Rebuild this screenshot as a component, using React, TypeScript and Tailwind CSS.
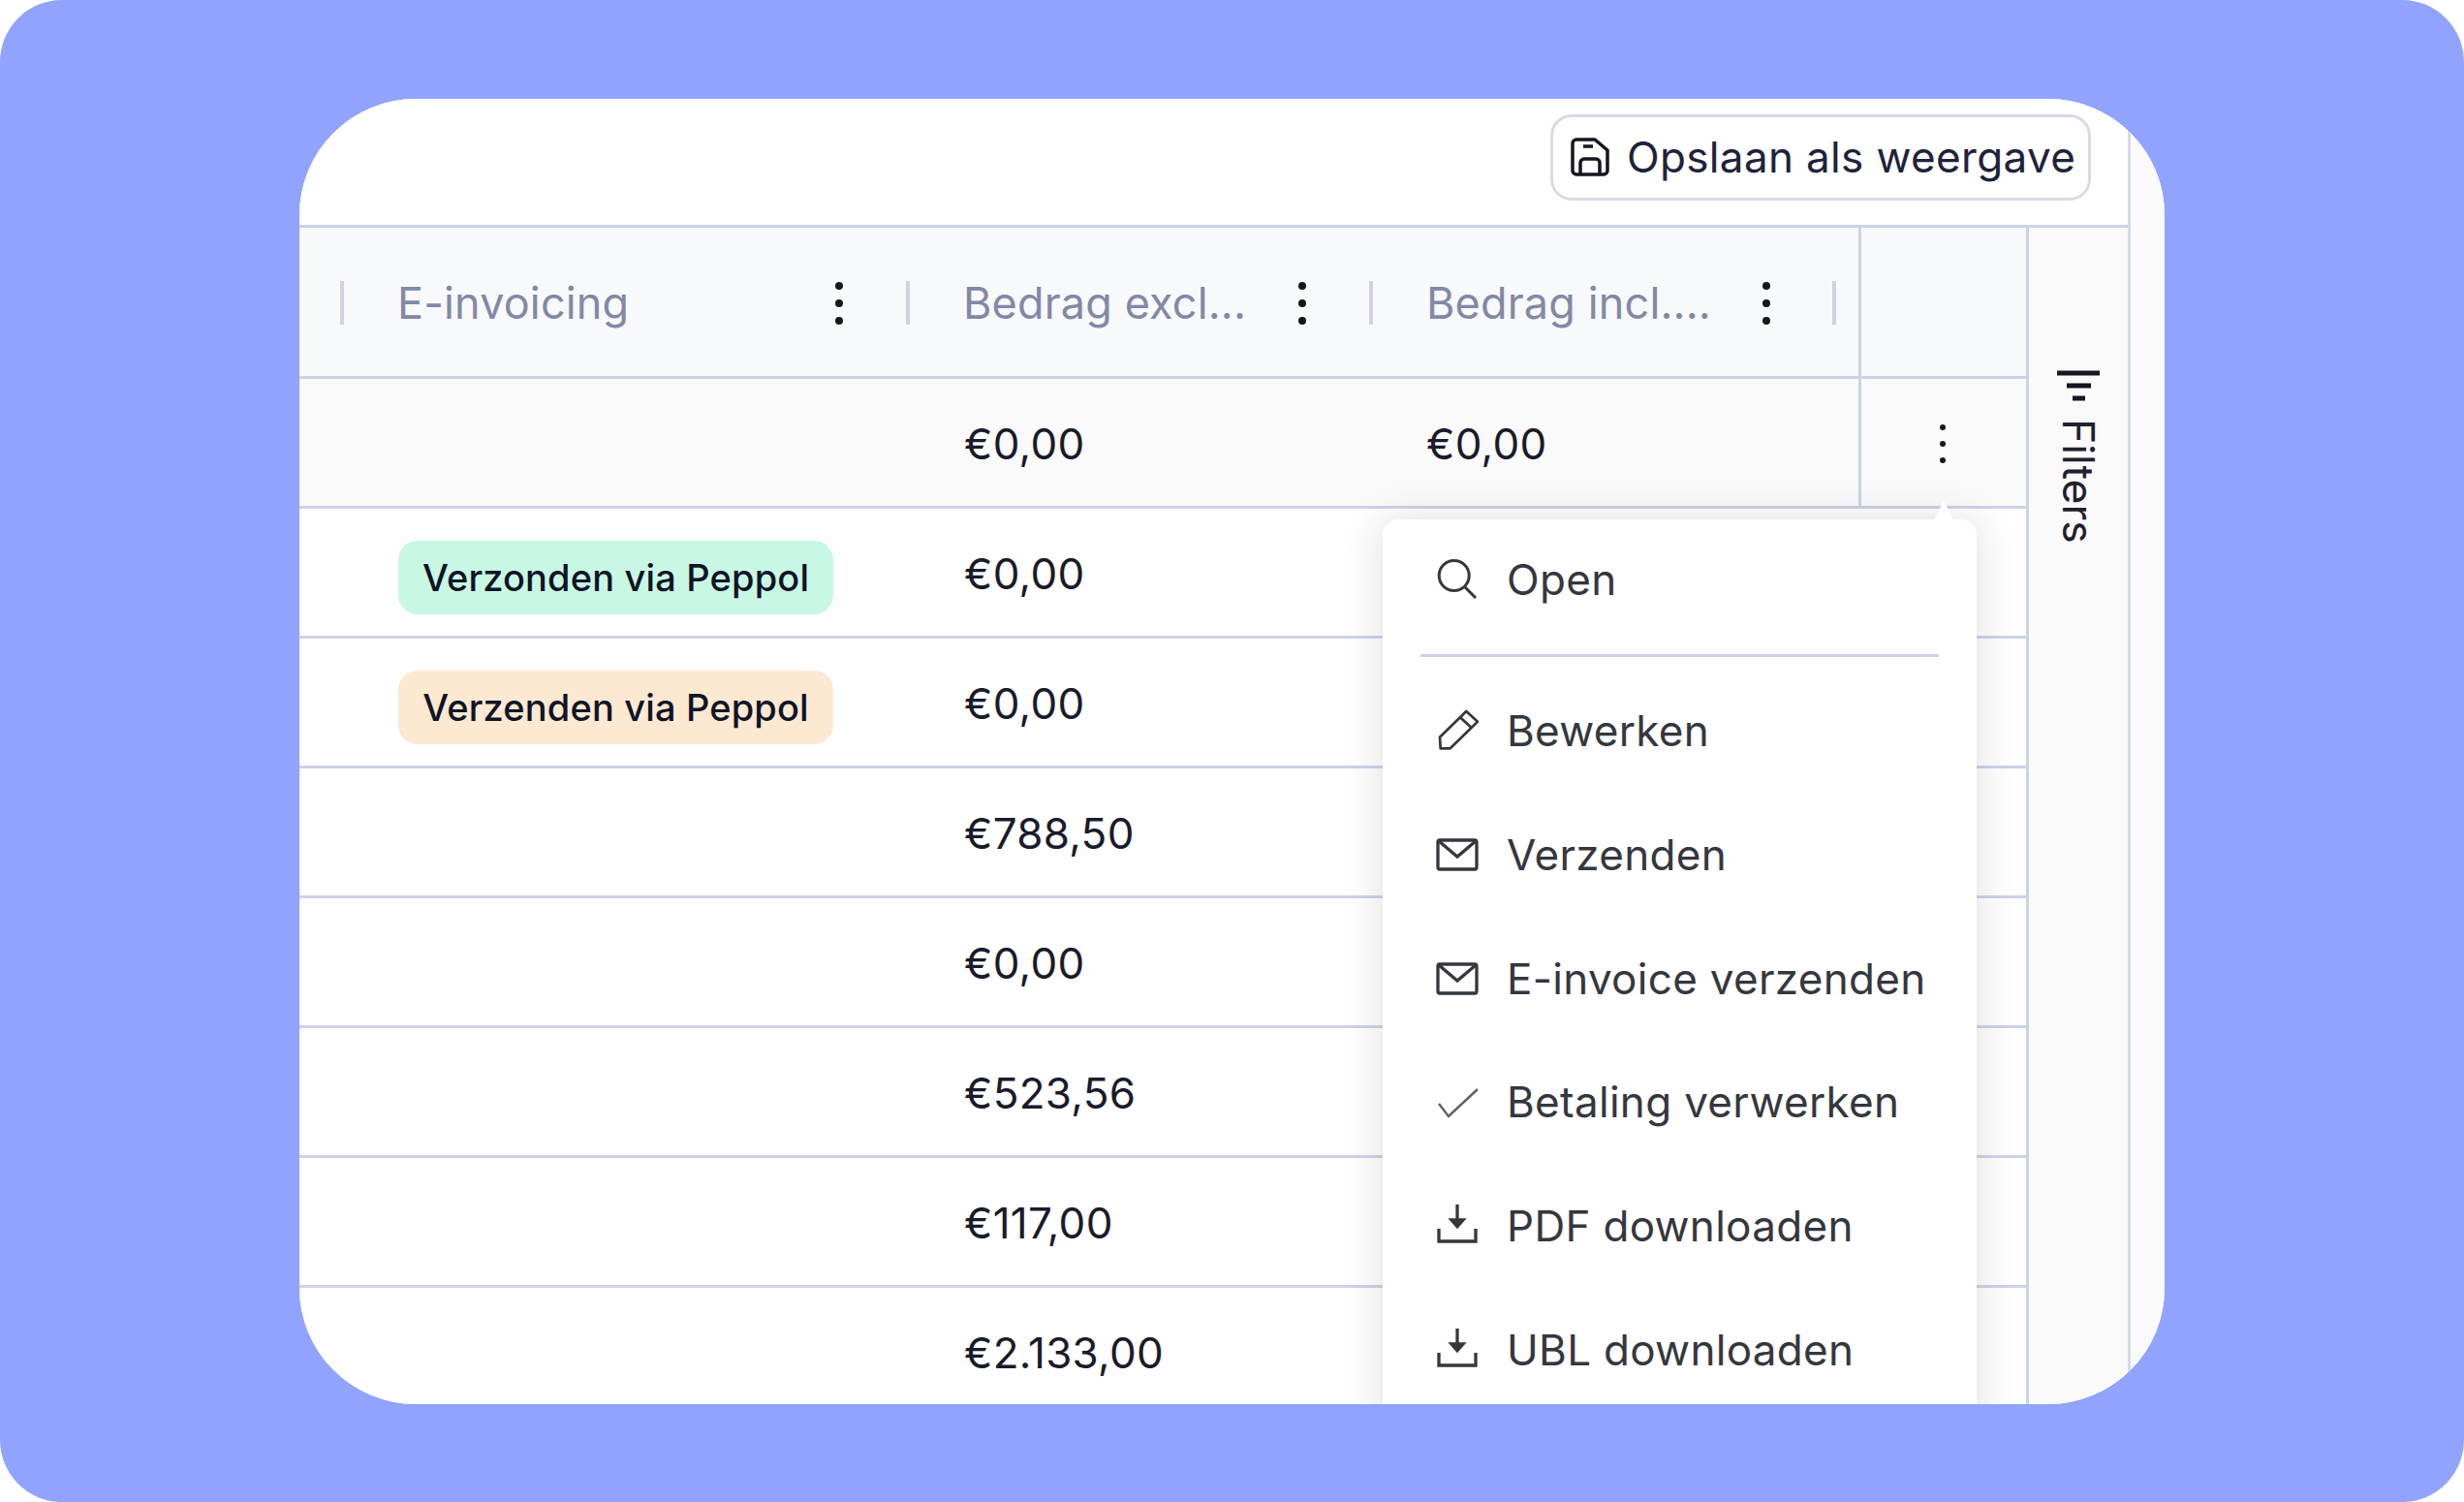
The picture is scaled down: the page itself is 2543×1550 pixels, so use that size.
const rows = [
    { value: '€0,00', badge: 'Verzonden via Peppol', color: 'bg-[#c8f8e3]' },
    { value: '€0,00', badge: 'Verzenden via Peppol', color: 'bg-[#fde9d2]' },
    { value: '€788,50' },
    { value: '€0,00' },
    { value: '€523,56' },
    { value: '€117,00' },
    { value: '€2.133,00' },
]

function Icon({ children, strokeWidth = 3 }: { children: React.ReactNode; strokeWidth?: number }) {
    return (
        <svg width="44" height="44" viewBox="0 0 44 44" fill="none" stroke="currentColor" strokeWidth={strokeWidth} className="shrink-0">
            {children}
        </svg>
    )
}

const SearchIcon = () => (
    <Icon>
        <circle cx="18.700" cy="18" r="15.500" />
        <path d="M30 30l11 11" />
    </Icon>
)

const PencilIcon = () => (
    <Icon strokeWidth={2.700}>
        <path d="M31.300 2L43 12.700 14.700 40.300H4.700L4 28.700z" strokeLinejoin="round" />
        <path d="M24.700 8l12 11" />
    </Icon>
)

const MailIcon = () => (
    <Icon strokeWidth={3.300}>
        <rect x="2" y="7" width="40" height="30" rx="2" />
        <path d="M3 8l19 16L41 8" />
    </Icon>
)

const CheckIcon = () => (
    <span className="text-[#5f6169]">
        <Icon strokeWidth={2.400}>
            <path d="M3 24l10 13L43 9" />
        </Icon>
    </span>
)

const DownloadIcon = () => (
    <Icon strokeWidth={3.300}>
        <path d="M3 25v13h38V25" />
        <path d="M22 0v23" />
        <path d="M14 15l8 9 8-9z" fill="currentColor" strokeWidth={1.500} />
    </Icon>
)

const menu = [
    { label: 'Bewerken', icon: <PencilIcon /> },
    { label: 'Verzenden', icon: <MailIcon /> },
    { label: 'E-invoice verzenden', icon: <MailIcon /> },
    { label: 'Betaling verwerken', icon: <CheckIcon /> },
    { label: 'PDF downloaden', icon: <DownloadIcon /> },
    { label: 'UBL downloaden', icon: <DownloadIcon /> },
]

function Dots({ small = false }: { small?: boolean }) {
    const dot = small ? 'w-[6px] h-[6px]' : 'w-[8px] h-[8px]'
    return (
        <div className={`flex flex-col items-center shrink-0 ${small ? 'gap-[11px]' : 'gap-[10px]'}`}>
            <span className={`rounded-full bg-[#15161f] ${dot}`} />
            <span className={`rounded-full bg-[#15161f] ${dot}`} />
            <span className={`rounded-full bg-[#15161f] ${dot}`} />
        </div>
    )
}

function Sep() {
    return <span className="w-[4px] h-[45px] bg-[#ccd3e6] shrink-0" />
}

function HeaderCell({ label, className, labelWidth }: { label: string; className: string; labelWidth: string }) {
    return (
        <div className={`flex items-center shrink-0 ${className}`}>
            <Sep />
            <span className={`ml-[55px] text-[45px] tracking-[0.15px] text-[#8289a6] whitespace-nowrap ${labelWidth}`}>{label}</span>
            <Dots />
        </div>
    )
}

export default function App() {
    return (
        <div
            className="w-[2543px] h-[1550px] bg-[#8fa3ff] rounded-[64px] flex items-center justify-center overflow-hidden"
            style={{ fontFamily: 'Inter, sans-serif' }}
        >
            <div className="relative flex w-[1925px] h-[1347px] bg-white rounded-[120px] overflow-hidden">
                <div className="flex flex-col w-[1890px] border-r-[3px] border-[#d5daea] shrink-0">
                    <div className="h-[130px] shrink-0 flex items-center justify-end pr-[38px] pb-[8px] bg-[#fefefe]">
                        <button className="flex items-center gap-[18px] w-[558px] h-[89px] pl-[18px] pb-[2px] rounded-[22px] border-[3px] border-[#d8dbe6] text-[#20223a] text-[44px] tracking-[0.35px] whitespace-nowrap">
                            <svg width="40" height="40" viewBox="0 0 40 40" fill="none" stroke="#15161f" strokeWidth="3.500" className="shrink-0">
                                <path d="M6 2h19l13 11v21a4 4 0 0 1-4 4H6a4 4 0 0 1-4-4V6a4 4 0 0 1 4-4z" strokeLinejoin="round" />
                                <path d="M13 9h10" />
                                <path d="M10 38V26a4 4 0 0 1 4-4h12a4 4 0 0 1 4 4v12" />
                            </svg>
                            Opslaan als weergave
                        </button>
                    </div>
                    <div className="flex flex-1 min-h-0 border-t-[3px] border-[#ccd3e6]">
                        <div className="flex flex-col w-[1782px] shrink-0">
                            <div className="flex items-center h-[156px] shrink-0 bg-[#f8f9fb] border-b-[3px] border-[#ccd3e6]">
                                <div className="flex items-center h-full pt-[3px]">
                                    <HeaderCell label="E-invoicing" className="w-[584px] ml-[42px]" labelWidth="w-[452px]" />
                                    <HeaderCell label="Bedrag excl..." className="w-[478px]" labelWidth="w-[346px]" />
                                    <HeaderCell label="Bedrag incl...." className="w-[478px]" labelWidth="w-[347px]" />
                                    <Sep />
                                </div>
                                <span className="h-full ml-[23px] border-l-[3px] border-[#ccd3e6]" />
                            </div>
                            <div className="flex items-center h-[134px] shrink-0 bg-[#fafafb] border-b-[3px] border-[#ccd3e6] text-[44px] tracking-[0.3px] text-[#1a1b2b]">
                                <div className="w-[686px] shrink-0" />
                                <div className="w-[477px] pt-[3px] shrink-0">€0,00</div>
                                <div className="w-[446px] pt-[3px] shrink-0">€0,00</div>
                                <div className="flex-1 h-full flex items-center justify-center pr-[2px] pt-[4px] border-l-[3px] border-[#ccd3e6]">
                                    <Dots small />
                                </div>
                            </div>
                            {rows.map((row, i) => (
                                <div key={i} className="flex items-center h-[134px] shrink-0 bg-[#fefefe] border-b-[3px] border-[#ccd3e6] text-[44px] tracking-[0.3px] text-[#1a1b2b]">
                                    <div className="w-[686px] pl-[102px] pt-[12px] shrink-0">
                                        {row.badge && (
                                            <span className={`inline-flex items-center justify-center w-[449px] h-[76px] rounded-[20px] text-[38px] tracking-[0.15px] font-medium text-[#101426] whitespace-nowrap ${row.color}`}>
                                                {row.badge}
                                            </span>
                                        )}
                                    </div>
                                    <div className="pt-[3px]">{row.value}</div>
                                </div>
                            ))}
                        </div>
                        <div className="flex-1 bg-[#fafafb] border-l-[3px] border-[#ccd3e6] flex flex-col items-center pt-[147px]">
                            <svg width="44" height="32" viewBox="0 0 44 32" fill="none" stroke="#15161f" strokeWidth="5" className="shrink-0">
                                <path d="M0 3h44M10 16h25M16 29h13" />
                            </svg>
                            <div className="mt-[18px] [writing-mode:vertical-rl] text-[44.500px] text-[#20212c]">Filters</div>
                        </div>
                    </div>
                </div>
                <div className="flex-1 bg-[#fafafb]" />

                <div className="absolute left-[1118px] top-[434px] w-[613px] h-[1000px] bg-[#fefefe] rounded-[16px] shadow-[0_0_40px_rgba(40,45,70,0.14)] text-[44px] tracking-[0.3px] text-[#35373f]">
                    <span className="absolute -top-[19px] right-[14px] w-[40px] h-[40px] bg-[#fefefe] [clip-path:polygon(50%_0,100%_100%,0_100%)]" />
                    <div className="flex items-center h-[139px] pb-[15px] pl-[55px] gap-[29px]">
                        <SearchIcon />
                        Open
                    </div>
                    <div className="h-[3px] mx-[39px] bg-[#ccd3e6]" />
                    <div className="flex flex-col pt-[13px]">
                        {menu.map((item) => (
                            <div key={item.label} className="flex items-center h-[127.700px] pl-[55px] gap-[29px] whitespace-nowrap">
                                {item.icon}
                                {item.label}
                            </div>
                        ))}
                    </div>
                </div>
            </div>
        </div>
    )
}
